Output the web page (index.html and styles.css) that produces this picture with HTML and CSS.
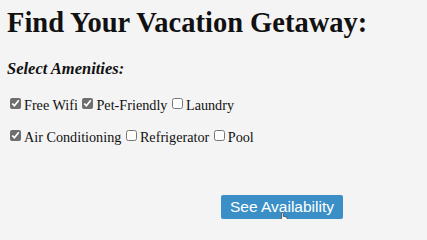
FILE: index.html
```html
<!DOCTYPE html>
<html>
<head>
<meta charset="utf-8">
<link rel="stylesheet" href="styles.css">
</head>
<body>
<h1 class="title">Find Your Vacation Getaway:</h1>
<h3 class="subtitle">Select Amenities:</h3>
<div class="row">
  <input type="checkbox" checked><label>Free Wifi</label>
  <input type="checkbox" checked><label>Pet-Friendly</label>
  <input type="checkbox"><label>Laundry</label>
</div>
<div class="row row-second">
  <input type="checkbox" checked><label>Air Conditioning</label>
  <input type="checkbox"><label>Refrigerator</label>
  <input type="checkbox"><label>Pool</label>
</div>
<div class="actions">
  <button class="btn">See Availability</button>
  <svg class="cursor" width="8" height="11" viewBox="0 0 8 11" aria-hidden="true">
    <path d="M2.5 0.6 C3.1 0.6 3.4 1 3.4 1.5 V4.4 L6 4.9 C6.8 5.1 7.3 5.6 7.2 6.4 L6.7 9.3 C6.6 9.9 6.2 10.4 5.6 10.4 H3.3 C2.8 10.4 2.5 10.1 2.2 9.7 L0.6 7.3 C0.3 6.9 0.5 6.4 0.9 6.3 C1.2 6.2 1.5 6.3 1.7 6.6 V1.5 C1.7 1 2 0.6 2.5 0.6 Z" fill="#fff" stroke="#333" stroke-width="0.7"/>
  </svg>
</div>
</body>
</html>
```
FILE: styles.css
```css
html, body {
  background: #f4f4f4;
}
body {
  margin: 7px;
  font-family: "Liberation Serif", "Times New Roman", serif;
  color: #111;
}
.title {
  font-size: 28.5px;
  font-weight: bold;
  line-height: 32px;
  margin: 0 0 19.5px;
}
.subtitle {
  font-size: 16.5px;
  font-style: italic;
  font-weight: bold;
  line-height: 20px;
  margin: 0 0 18px;
}
.row {
  font-size: 14.2px;
  line-height: 16px;
}
.row-second {
  margin-top: 16px;
}
.row input {
  width: 11px;
  height: 11px;
  margin: 0 3px 0 1px;
  vertical-align: 1px;
  accent-color: #6e6e6e;
}
.row input:first-child {
  margin-left: 3px;
}
.actions {
  position: relative;
  margin-top: 50px;
  padding-left: 214px;
}
.btn {
  background: #3a8fc6;
  color: #fff;
  border: none;
  border-radius: 2px;
  font-family: "Liberation Sans", Arial, sans-serif;
  font-size: 15.5px;
  width: 122px;
  height: 24px;
  padding: 0;
}
.cursor {
  position: absolute;
  left: 273px;
  top: 17px;
}
```
